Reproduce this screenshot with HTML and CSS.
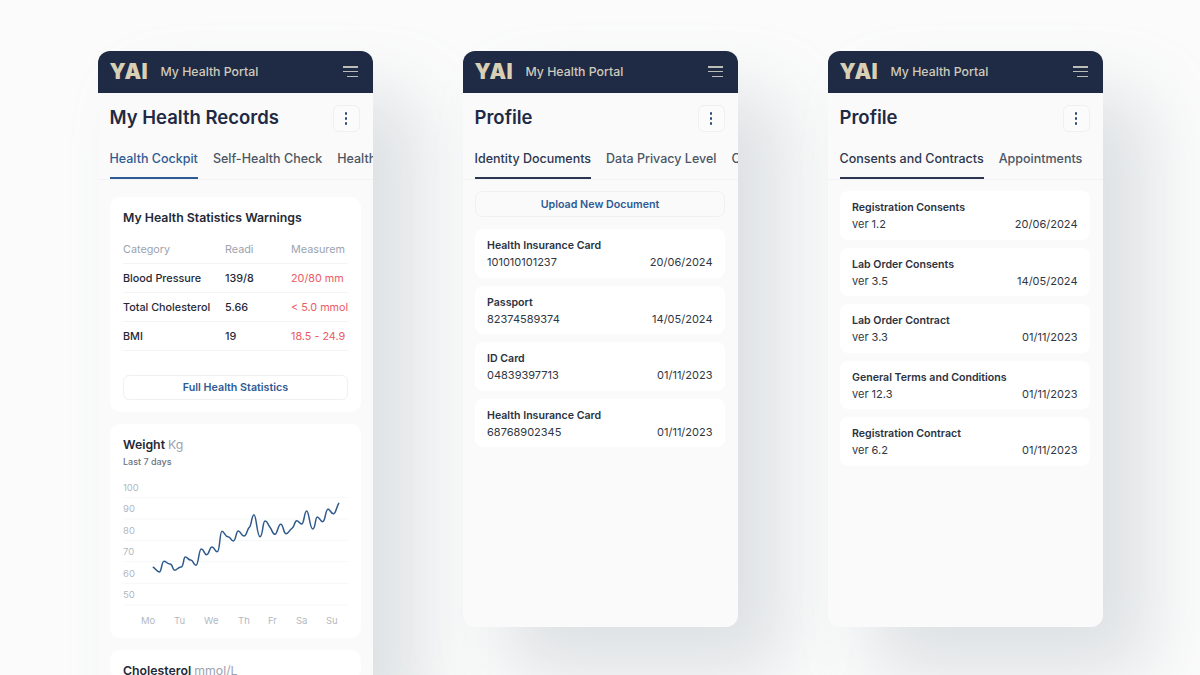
FILE: index.html
```html
<!DOCTYPE html>
<html lang="en">
<head>
	<meta charset="utf-8"/>
	<title>My Health Portal</title>
	<link rel="stylesheet" href="styles.css">
</head>

<body>

<div class="stage">

	<!-- health records -->
	<section class="phone phone_tall">
		<header class="topbar">
			<span class="logo">YAI</span>
			<span class="portal">My Health Portal</span>
			<span class="burger"><i></i><i></i><i></i></span>
		</header>
		<div class="title_row">
			<h1>My Health Records</h1>
			<button class="kebab"><i></i><i></i><i></i></button>
		</div>
		<nav class="tabs tabs_blue">
			<a class="tab active">Health Cockpit</a>
			<a class="tab">Self-Health Check</a>
			<a class="tab">Health Reports</a>
		</nav>
		<div class="cockpit">
			<div class="card warnings">
				<h3>My Health Statistics Warnings</h3>
				<div class="stat_row stat_head">
					<span>Category</span><span>Readi</span><span>Measurem</span>
				</div>
				<div class="stat_row">
					<span>Blood Pressure</span><span>139/8</span><span class="bad">20/80 mm</span>
				</div>
				<div class="stat_row">
					<span>Total Cholesterol</span><span>5.66</span><span class="bad">&lt; 5.0 mmol</span>
				</div>
				<div class="stat_row">
					<span>BMI</span><span>19</span><span class="bad">18.5 - 24.9</span>
				</div>
				<button class="wide_btn">Full Health Statistics</button>
			</div>
			<div class="card weight">
				<h3>Weight <span class="unit">Kg</span></h3>
				<p class="sub">Last 7 days</p>
				<svg class="chart" width="226" height="148" viewBox="0 0 226 148">
					<g class="grid">
						<path d="M0 17.7H226M0 39H226M0 60.3H226M0 81.7H226M0 103.3H226M0 125H226"/>
					</g>
					<g class="axis">
						<text x="0" y="11">100</text>
						<text x="0" y="32">90</text>
						<text x="0" y="54">80</text>
						<text x="0" y="75">70</text>
						<text x="0" y="97">60</text>
						<text x="0" y="118">50</text>
						<text x="18" y="144">Mo</text>
						<text x="51" y="144">Tu</text>
						<text x="81" y="144">We</text>
						<text x="115" y="144">Th</text>
						<text x="145" y="144">Fr</text>
						<text x="173" y="144">Sa</text>
						<text x="203" y="144">Su</text>
					</g>
					<path class="line" d="M30.3 87.3C32 88 34 92 36.3 92S38.6 81.3 41 81.3S44 84 47 84S49.3 90.3 51.7 90.3S54.9 87 58 87S60.1 77 62.3 77S65 80 67.7 80S70.3 85.3 73 85.3S75.6 69 78.3 69S81 74.7 83.7 74.7S86.3 67 89 67S91.6 71.7 94.3 71.7S96.6 51.3 99 51.3S102 56.7 105 56.7S107.6 61 110.3 61S112.8 51 115.3 51S118.1 56 121 56S124 49 126.3 47.3S128.6 34.7 131 34.7S134 56.7 137 56.7S139.5 41 142 41S144.5 44 147 47.3S149.5 54.3 152 54.3S154.9 44.3 157.7 44.3S160.3 53.7 163 53.7S166 50 169 48.3S171.3 40.7 173.7 40.7S176.2 44 178.7 44S181.2 31 183.7 31S186.7 49 189.7 49S192 37 194.3 37S197 41.7 199.7 41.7S202.3 29.3 205 29.3S207.6 33.7 210.3 33.7S213 28 215.7 23.3"/>
				</svg>
			</div>
			<div class="card">
				<h3>Cholesterol <span class="unit">mmol/L</span></h3>
			</div>
		</div>
	</section>

	<!-- identity documents -->
	<section class="phone">
		<header class="topbar">
			<span class="logo">YAI</span>
			<span class="portal">My Health Portal</span>
			<span class="burger"><i></i><i></i><i></i></span>
		</header>
		<div class="title_row">
			<h1>Profile</h1>
			<button class="kebab"><i></i><i></i><i></i></button>
		</div>
		<nav class="tabs">
			<a class="tab active">Identity Documents</a>
			<a class="tab">Data Privacy Level</a>
			<a class="tab">Consents</a>
		</nav>
		<div class="doc_list">
			<button class="wide_btn upload">Upload New Document</button>
			<div class="doc">
				<b>Health Insurance Card</b>
				<div class="doc_meta"><span>101010101237</span><span>20/06/2024</span></div>
			</div>
			<div class="doc">
				<b>Passport</b>
				<div class="doc_meta"><span>82374589374</span><span>14/05/2024</span></div>
			</div>
			<div class="doc">
				<b>ID Card</b>
				<div class="doc_meta"><span>04839397713</span><span>01/11/2023</span></div>
			</div>
			<div class="doc">
				<b>Health Insurance Card</b>
				<div class="doc_meta"><span>68768902345</span><span>01/11/2023</span></div>
			</div>
		</div>
	</section>

	<!-- consents -->
	<section class="phone">
		<header class="topbar">
			<span class="logo">YAI</span>
			<span class="portal">My Health Portal</span>
			<span class="burger"><i></i><i></i><i></i></span>
		</header>
		<div class="title_row">
			<h1>Profile</h1>
			<button class="kebab"><i></i><i></i><i></i></button>
		</div>
		<nav class="tabs">
			<a class="tab active">Consents and Contracts</a>
			<a class="tab">Appointments</a>
		</nav>
		<div class="doc_list">
			<div class="doc">
				<b>Registration Consents</b>
				<div class="doc_meta"><span>ver 1.2</span><span>20/06/2024</span></div>
			</div>
			<div class="doc">
				<b>Lab Order Consents</b>
				<div class="doc_meta"><span>ver 3.5</span><span>14/05/2024</span></div>
			</div>
			<div class="doc">
				<b>Lab Order Contract</b>
				<div class="doc_meta"><span>ver 3.3</span><span>01/11/2023</span></div>
			</div>
			<div class="doc">
				<b>General Terms and Conditions</b>
				<div class="doc_meta"><span>ver 12.3</span><span>01/11/2023</span></div>
			</div>
			<div class="doc">
				<b>Registration Contract</b>
				<div class="doc_meta"><span>ver 6.2</span><span>01/11/2023</span></div>
			</div>
		</div>
	</section>

</div>

</body>
</html>
```

FILE: styles.css
```css
* {
	box-sizing: border-box;
}
html, body {
	height: 100%;
}
body {
	margin: 0;
	overflow: hidden;
	background: #fbfbfb;
	color: #1f2937;
	font-family: Inter, "Noto Sans", sans-serif;
}
.stage {
	display: flex;
	gap: 90px;
	height: 675px;
	padding: 50.5px 0 0 97.5px;
	overflow: hidden;
}
.phone {
	flex: none;
	width: 275px;
	height: 576.5px;
	background: #fafafa;
	border-radius: 12px;
	overflow: hidden;
	box-shadow: 45px 45px 70px rgba(160, 170, 176, 0.32);
}
.phone_tall {
	height: 640px;
	border-radius: 12px 12px 0 0;
}

/* top bar */
.topbar {
	display: flex;
	align-items: center;
	height: 42.5px;
	padding: 0 14.5px 0 12px;
	background: #1f2a44;
}
.logo {
	width: 39px;
	font-size: 21px;
	font-weight: 900;
	letter-spacing: 0.4px;
	color: #d8cfb4;
}
.portal {
	margin-left: 12px;
	font-size: 12.3px;
	font-weight: 500;
	color: #cfcabb;
}
.burger {
	display: flex;
	flex-direction: column;
	align-items: flex-end;
	gap: 3.2px;
	width: 15px;
	margin-left: auto;
}
.burger i {
	width: 100%;
	height: 1.4px;
	background: #bdbdb8;
}
.burger i:last-child {
	width: 11px;
}

/* title */
.title_row {
	display: flex;
	align-items: flex-start;
	justify-content: space-between;
	height: 58px;
	padding: 12px 13px 0 12px;
}
h1 {
	margin: 0;
	font-size: 18.5px;
	line-height: 24px;
	font-weight: 600;
	color: #1f2a44;
}
.kebab {
	display: flex;
	flex-direction: column;
	align-items: center;
	justify-content: center;
	gap: 2.5px;
	width: 27px;
	height: 27px;
	padding: 0;
	background: #fbfbfb;
	border: 1px solid #eef0f1;
	border-radius: 6px;
}
.kebab i {
	width: 2.5px;
	height: 2.5px;
	border-radius: 50%;
	background: #2f4a78;
}

/* tabs */
.tabs {
	display: flex;
	gap: 15px;
	height: 29px;
	padding-left: 12px;
	overflow: hidden;
	white-space: nowrap;
	font-size: 12.5px;
	line-height: 16px;
	font-weight: 500;
	color: #4b5563;
	border-bottom: 1px solid #f2f3f4;
}
.tab {
	flex: none;
	height: 28px;
}
.tab.active {
	color: #2c3650;
	border-bottom: 2px solid #2c3650;
}
.tabs_blue .tab.active {
	color: #2f5a94;
	border-bottom-color: #2f5a94;
}

/* cockpit cards */
.cockpit {
	display: flex;
	flex-direction: column;
	gap: 12px;
	padding: 17px 11.5px 0 12.5px;
}
.card {
	padding: 13px 13px 0;
	background: #fff;
	border-radius: 10px;
}
h3 {
	margin: 0;
	font-size: 12.3px;
	line-height: 16px;
	font-weight: 600;
	color: #1f2937;
}
.warnings {
	height: 215px;
}
.stat_row {
	display: grid;
	grid-template-columns: 102px 66px 1fr;
	height: 29px;
	align-items: center;
	overflow: hidden;
	font-size: 10.8px;
	font-weight: 500;
	white-space: nowrap;
	border-bottom: 1px solid #f3f4f5;
}
.stat_head {
	height: 30px;
	margin-top: 8px;
	padding-top: 2px;
	color: #9ca3af;
	font-weight: 400;
}
.bad {
	color: #ea5a63;
	font-weight: 400;
}
.wide_btn {
	display: block;
	width: 100%;
	height: 25px;
	margin-top: 23.5px;
	padding: 0;
	background: #fff;
	border: 1px solid #eef0f1;
	border-radius: 6px;
	font-family: inherit;
	font-size: 10.7px;
	font-weight: 600;
	color: #2f5a94;
}
.weight {
	height: 214px;
}
.unit {
	font-weight: 400;
	color: #9ca3af;
}
.sub {
	margin: 3px 0 0;
	font-size: 9px;
	line-height: 12px;
	font-weight: 500;
	color: #6b7280;
}
.chart {
	display: block;
	margin-top: 12px;
}
.grid path {
	fill: none;
	stroke: #f6f7f8;
	stroke-width: 1;
}
.axis text {
	font-size: 9.5px;
	fill: #b3b8bf;
}
.line {
	fill: none;
	stroke: #2f5a8c;
	stroke-width: 1.5;
	stroke-linecap: round;
}

/* document rows */
.doc_list {
	display: flex;
	flex-direction: column;
	gap: 8px;
	padding: 11px 12.5px 0;
}
.upload {
	height: 26px;
	margin: 0 0 4px;
	background: #fafafa;
	border-radius: 7px;
}
.doc {
	height: 48.5px;
	padding: 9px 12.5px 0 12px;
	background: #fff;
	border-radius: 8px;
	font-size: 11px;
	line-height: 16px;
}
.doc b {
	display: block;
	font-size: 10.6px;
	font-weight: 600;
	color: #2a3240;
}
.doc_meta {
	display: flex;
	justify-content: space-between;
	color: #2f3744;
	font-weight: 400;
}
```
